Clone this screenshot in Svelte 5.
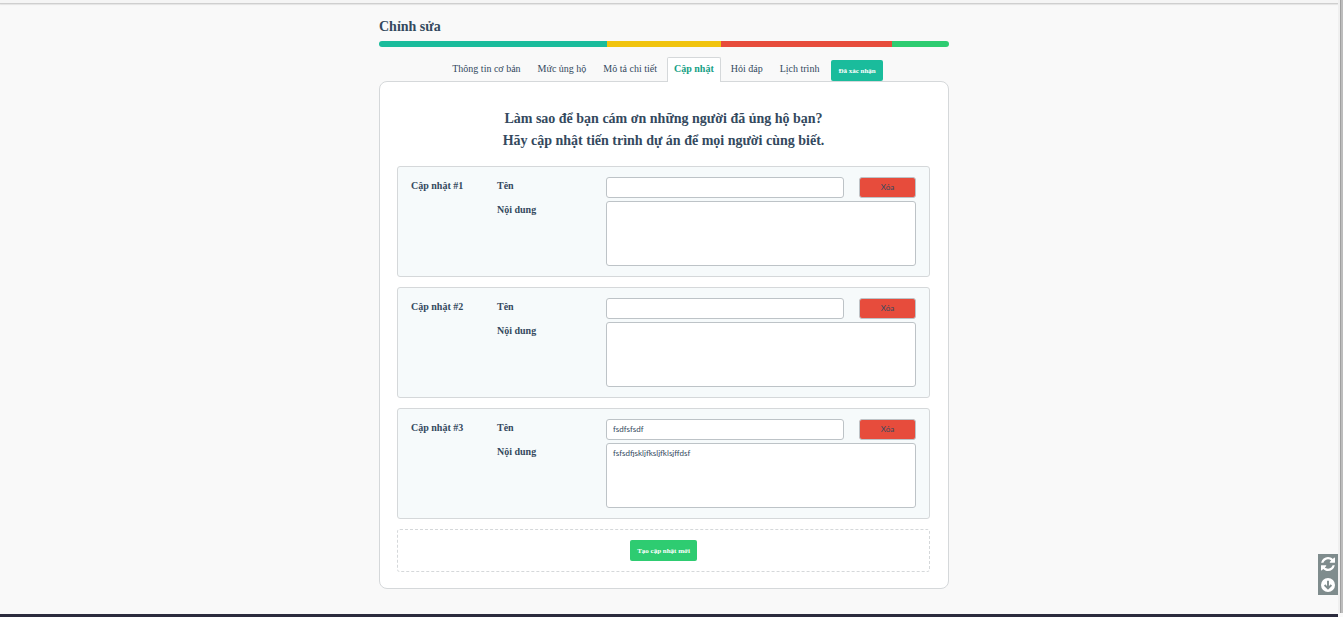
<script>
  let nextId = 4;
  let updates = $state([
    { id: 1, name: '', content: '' },
    { id: 2, name: '', content: '' },
    { id: 3, name: 'fsdfsfsdf', content: 'fsfsdfjskljfksljfklsjffdsf' }
  ]);
  const steps = [
    { color: '#1abc9c', share: 40 },
    { color: '#f1c40f', share: 20 },
    { color: '#e74c3c', share: 30 },
    { color: '#2ecc71', share: 10 }
  ];
  const tabs = ['Thông tin cơ bản', 'Mức ủng hộ', 'Mô tả chi tiết', 'Cập nhật', 'Hỏi đáp', 'Lịch trình'];
  let current = $state('Cập nhật');

  function remove(id) {
    updates = updates.filter((u) => u.id !== id);
  }
  function add() {
    updates.push({ id: nextId++, name: '', content: '' });
  }
</script>

<div class="page">
  <header class="topbar"></header>

  <main>
    <div class="column">
      <h1>Chỉnh sửa</h1>
      <div class="progress">
        {#each steps as s}
          <span style:width="{s.share}%" style:background={s.color}></span>
        {/each}
      </div>

      <nav>
        {#each tabs as t}
          <a href="#tab" class:active={t === current} onclick={(e) => { e.preventDefault(); current = t; }}>{t}</a>
        {/each}
        <button type="button" class="solid confirmed">Đã xác nhận</button>
      </nav>

      <section class="card">
        <h2>Làm sao để bạn cám ơn những người đã ủng hộ bạn?<br />Hãy cập nhật tiến trình dự án để mọi người cùng biết.</h2>

        {#each updates as u, i (u.id)}
          <div class="update">
            <strong>Cập nhật #{i + 1}</strong>
            <label for="name-{u.id}">Tên</label>
            <div class="line">
              <input id="name-{u.id}" type="text" bind:value={u.name} />
              <button type="button" class="delete" onclick={() => remove(u.id)}>Xóa</button>
            </div>
            <label class="second" for="content-{u.id}">Nội dung</label>
            <textarea id="content-{u.id}" bind:value={u.content}></textarea>
          </div>
        {/each}

        <div class="create">
          <button type="button" class="solid" onclick={add}>Tạo cập nhật mới</button>
        </div>
      </section>
    </div>
  </main>

  <footer></footer>

  <div class="tools">
    <button type="button" aria-label="Tải lại">
      <svg viewBox="0 0 1536 1536"><path fill="#fff" d="M1511 928q0 5-1 7-64 268-268 434.500T764 1536q-146 0-282.500-55T238 1324l-129 129q-19 19-45 19t-45-19-19-45V960q0-26 19-45t45-19h448q26 0 45 19t19 45-19 45l-137 137q71 66 161 102t187 36q134 0 250-65t186-179q11-17 53-117 8-23 30-23h192q13 0 22.500 9.500t9.500 22.500zM1536 128v448q0 26-19 45t-45 19h-448q-26 0-45-19t-19-45 19-45l138-138Q969 256 768 256q-134 0-250 65T332 500q-11 17-53 117-8 23-30 23H50q-13 0-22.500-9.500T18 608v-7q65-268 270-434.500T768 0q146 0 284 55.500T1297 212l130-129q19-19 45-19t45 19 19 45z" /></svg>
    </button>
    <button type="button" aria-label="Xuống cuối trang">
      <svg viewBox="0 0 14 14"><circle cx="7" cy="7" r="7" fill="#fff" /><path d="M7 2.800V10M3.600 7 7 10.400 10.400 7" fill="none" stroke="#7f8c8d" stroke-width="1.900" /></svg>
    </button>
  </div>
  <div class="scroll"></div>
</div>

<style>
  :global(body) {
    margin: 0;
    background: #f9f9f9;
  }
  .page {
    display: flex;
    flex-direction: column;
    min-height: 100vh;
    font-family: 'Liberation Serif', 'Times New Roman', serif;
    color: #34495e;
  }
  .topbar {
    height: 3px;
    margin-right: 5px;
    background: #f5f5f5;
    border-bottom: 1px solid #cfcfcf;
    box-shadow: 0 1px 1px #e4e4e4;
  }
  main {
    flex: 1;
    padding: 13px 15px 24px 0;
  }
  .column {
    max-width: 570px;
    margin: 0 auto;
  }
  h1 {
    margin: 0 0 4px;
    font-size: 14px;
    line-height: 20px;
  }
  .progress {
    display: flex;
    height: 6px;
    border-radius: 3px;
    overflow: hidden;
  }
  nav {
    display: flex;
    justify-content: center;
    align-items: flex-end;
    margin-top: 10px;
  }
  nav a {
    box-sizing: border-box;
    height: 24px;
    padding: 0 6px;
    margin-right: 3px;
    border: 1px solid transparent;
    border-bottom: 0;
    border-radius: 2px 2px 0 0;
    font-size: 10px;
    line-height: 22px;
    color: #34495e;
    text-decoration: none;
    white-space: nowrap;
  }
  nav a.active {
    height: 25px;
    margin-bottom: -1px;
    background: #fff;
    border-color: #d5d8da;
    color: #16a085;
    font-weight: bold;
    position: relative;
    z-index: 1;
  }
  button {
    font-family: inherit;
    cursor: pointer;
  }
  .solid {
    height: 21px;
    padding: 0 7px;
    border: 0;
    border-radius: 2px;
    background: #2ecc71;
    color: #fff;
    font-size: 7px;
    font-weight: bold;
    white-space: nowrap;
  }
  .confirmed {
    margin-left: 2px;
    background: #1abc9c;
  }
  .card {
    display: flex;
    flex-direction: column;
    gap: 10px;
    padding: 26px 18px 16px 17px;
    background: #fff;
    border: 1px solid #d5d8da;
    border-radius: 8px;
  }
  h2 {
    margin: 0 0 4px;
    font-size: 14px;
    line-height: 22px;
    text-align: center;
  }
  .update {
    display: grid;
    grid-template-columns: 86px 109px 1fr;
    row-gap: 3px;
    padding: 10px 13px;
    background: #f6fafb;
    border: 1px solid #d5d8da;
    border-radius: 3px;
    font-size: 10px;
    line-height: 18px;
    font-weight: bold;
  }
  .second {
    grid-column: 2;
  }
  .line {
    display: flex;
    gap: 15px;
  }
  input,
  textarea,
  .delete {
    box-sizing: border-box;
    border: 1px solid #bdc3c7;
    border-radius: 3px;
    color: #34495e;
    font-family: Lato, sans-serif;
    font-size: 8px;
  }
  input {
    flex: 1;
    min-width: 0;
    height: 21px;
    padding: 0 6px 1px;
    background: #fff;
  }
  textarea {
    display: block;
    width: 100%;
    height: 65px;
    padding: 4px 6px;
    background: #fff;
    line-height: 10px;
    resize: none;
  }
  .delete {
    width: 57px;
    padding: 0 0 1px;
    background: #e74c3c;
  }
  .create {
    display: flex;
    justify-content: center;
    padding: 10px;
    border: 1px dashed #d5d8da;
    border-radius: 3px;
  }
  footer {
    height: 3px;
    margin-right: 5px;
    background: #2b2b3d;
  }
  .tools {
    position: fixed;
    right: 5px;
    bottom: 22px;
    display: flex;
    flex-direction: column;
    background: #7f8c8d;
  }
  .tools button {
    display: grid;
    place-items: center;
    width: 20px;
    height: 20px;
    padding: 0;
    border: 0;
    background: none;
  }
  .tools button + button {
    height: 21px;
  }
  .tools svg {
    width: 14px;
    height: 14px;
  }
  .scroll {
    position: fixed;
    top: 0;
    right: 0;
    bottom: 4px;
    width: 2px;
    background: #bdbdbd;
    border-left: 1px solid #a0a0a0;
    box-shadow: -2px 0 #f0f0f0;
  }
</style>
